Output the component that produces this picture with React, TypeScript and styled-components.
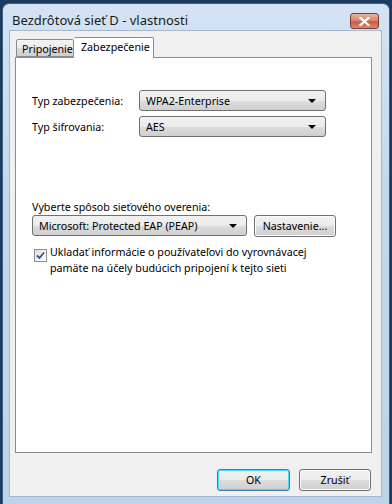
import React from 'react';
import styled, { createGlobalStyle } from 'styled-components';

const GlobalStyle = createGlobalStyle`
  html, body {
    margin: 0;
    padding: 0;
    background: #1d3b5e;
    width: 392px;
    height: 504px;
    overflow: hidden;
    font-family: "Noto Sans", Lato, sans-serif;
    font-size: 10.7px;
  }
`;

const Window = styled.div`
  margin: 3px 0 0 2px;
  width: 388px;
  height: 501px;
  box-sizing: border-box;
  padding: 0 7px 7px 6px;
  border-radius: 7px 7px 0 0;
  border: 1px solid #3e5e7e;
  border-bottom: none;
  background: linear-gradient(180deg, #d3e3f3 0%, #c3d8ee 40%, #bcd3ea 100%);
  display: flex;
  flex-direction: column;
`;

const TitleBar = styled.div`
  height: 26px;
  display: flex;
  align-items: center;
  justify-content: space-between;
  padding-left: 3px;
`;

const Title = styled.span`
  font-size: 13px;
  color: #1b1b1b;
  margin-top: 6px;
`;

const CloseButton = styled.div`
  width: 27px;
  height: 14px;
  margin-top: 8px;
  margin-right: 3px;
  border-radius: 3px;
  border: 1px solid #7a3a2e;
  background: linear-gradient(180deg, #e9b2a0 0%, #d8826a 50%, #c75a3f 55%, #dc8a6e 100%);
  display: flex;
  align-items: center;
  justify-content: center;
`;

const Client = styled.div`
  flex: 1;
  background: #f0f0f0;
  border: 1px solid #a4b8cd;
  padding: 6px 9px 0 5px;
  display: flex;
  flex-direction: column;
`;

const TabStrip = styled.div`
  display: flex;
  align-items: flex-end;
  height: 20px;
  padding-left: 1px;
  position: relative;
  z-index: 1;
`;

const Tab = styled.div<{ $active?: boolean; $width: number }>`
  box-sizing: border-box;
  width: ${(p) => p.$width}px;
  height: ${(p) => (p.$active ? '21px' : '18px')};
  margin-bottom: ${(p) => (p.$active ? '-1px' : '0')};
  padding: ${(p) => (p.$active ? '2px 0 0 7px' : '2px 0 0 5px')};
  border: 1px solid #898c95;
  border-bottom: ${(p) => (p.$active ? 'none' : '1px solid #898c95')};
  border-left: ${(p) => (p.$active ? 'none' : '1px solid #898c95')};
  border-radius: 2px 2px 0 0;
  background: ${(p) =>
    p.$active ? '#ffffff' : 'linear-gradient(180deg, #f3f3f3 0%, #ebebeb 50%, #dddddd 51%, #cfcfcf 100%)'};
  color: #000;
  line-height: 15px;
  white-space: nowrap;
`;

const Panel = styled.div`
  height: 396px;
  flex-shrink: 0;
  box-sizing: border-box;
  border: 1px solid #898c95;
  background: #ffffff;
  padding: 32px 0 0 16px;
  display: flex;
  flex-direction: column;
`;

const FieldRow = styled.div`
  display: flex;
  align-items: center;
  height: 21px;
  margin-bottom: 5px;
`;

const Label = styled.span`
  width: 107px;
  color: #000;
`;

const Combo = styled.div<{ $width: number }>`
  box-sizing: border-box;
  width: ${(p) => p.$width}px;
  height: 21px;
  border: 1px solid #707070;
  border-radius: 3px;
  background: linear-gradient(180deg, #f2f2f2 0%, #ebebeb 50%, #dddddd 51%, #cfcfcf 100%);
  display: flex;
  align-items: center;
  justify-content: space-between;
  padding: 0 9px 0 6px;
  color: #000;
`;

const Arrow = styled.span`
  width: 0;
  height: 0;
  border-left: 4px solid transparent;
  border-right: 4px solid transparent;
  border-top: 4px solid #000;
`;

const SectionLabel = styled.div`
  margin-top: 57px;
  height: 16px;
  line-height: 16px;
  color: #000;
`;

const ButtonRow = styled.div`
  display: flex;
  gap: 7px;
`;

const Button = styled.div<{ $width: number; $default?: boolean }>`
  box-sizing: border-box;
  width: ${(p) => p.$width}px;
  height: 22px;
  border: 1px solid ${(p) => (p.$default ? '#3c7fb1' : '#707070')};
  box-shadow: ${(p) => (p.$default ? 'inset 0 0 0 1px #48d8fb' : 'inset 0 0 0 1px #fcfcfc')};
  border-radius: 3px;
  background: linear-gradient(180deg, #f2f2f2 0%, #ebebeb 50%, #dddddd 51%, #cfcfcf 100%);
  display: flex;
  align-items: center;
  justify-content: center;
  color: #000;
`;

const CheckRow = styled.div`
  display: flex;
  align-items: flex-start;
  margin-top: 7px;
  margin-left: 2px;
`;

const CheckBox = styled.div`
  box-sizing: border-box;
  width: 13px;
  height: 13px;
  margin-top: 5px;
  margin-right: 3px;
  border: 1px solid #8e8f8f;
  background: linear-gradient(135deg, #dcdcdc 0%, #f4f4f4 60%, #ffffff 100%);
  display: flex;
  align-items: center;
  justify-content: center;
  flex-shrink: 0;
`;

const CheckText = styled.div`
  color: #000;
  line-height: 16px;
`;

const Footer = styled.div`
  flex: 1;
  display: flex;
  justify-content: flex-end;
  align-items: flex-start;
  padding-top: 16px;
  padding-right: 1px;
  gap: 9px;
`;

export default function App() {
  return (
    <>
      <GlobalStyle />
      <Window>
        <TitleBar>
          <Title>Bezdrôtová sieť D - vlastnosti</Title>
          <CloseButton>
            <svg width="11" height="9" viewBox="0 0 11 9">
              <path d="M1.5 1 L9.5 8 M9.5 1 L1.5 8" stroke="#ffffff" strokeWidth="2.2" strokeLinecap="square" />
            </svg>
          </CloseButton>
        </TitleBar>
        <Client>
          <TabStrip>
            <Tab $width={58}>Pripojenie</Tab>
            <Tab $active $width={80}>Zabezpečenie</Tab>
          </TabStrip>
          <Panel>
            <FieldRow>
              <Label>Typ zabezpečenia:</Label>
              <Combo $width={187}>
                WPA2-Enterprise
                <Arrow />
              </Combo>
            </FieldRow>
            <FieldRow>
              <Label>Typ šifrovania:</Label>
              <Combo $width={187}>
                AES
                <Arrow />
              </Combo>
            </FieldRow>
            <SectionLabel>Vyberte spôsob sieťového overenia:</SectionLabel>
            <ButtonRow>
              <Combo $width={215}>
                Microsoft: Protected EAP (PEAP)
                <Arrow />
              </Combo>
              <Button $width={82}>Nastavenie...</Button>
            </ButtonRow>
            <CheckRow>
              <CheckBox>
                <svg width="9" height="9" viewBox="0 0 9 9">
                  <path d="M1 4.5 L3.5 7 L8 1.5" fill="none" stroke="#2f4f8f" strokeWidth="1.8" />
                </svg>
              </CheckBox>
              <CheckText>
                Ukladať informácie o používateľovi do vyrovnávacej
                <br />
                pamäte na účely budúcich pripojení k tejto sieti
              </CheckText>
            </CheckRow>
          </Panel>
          <Footer>
            <Button $width={73} $default>OK</Button>
            <Button $width={72}>Zrušiť</Button>
          </Footer>
        </Client>
      </Window>
    </>
  );
}
